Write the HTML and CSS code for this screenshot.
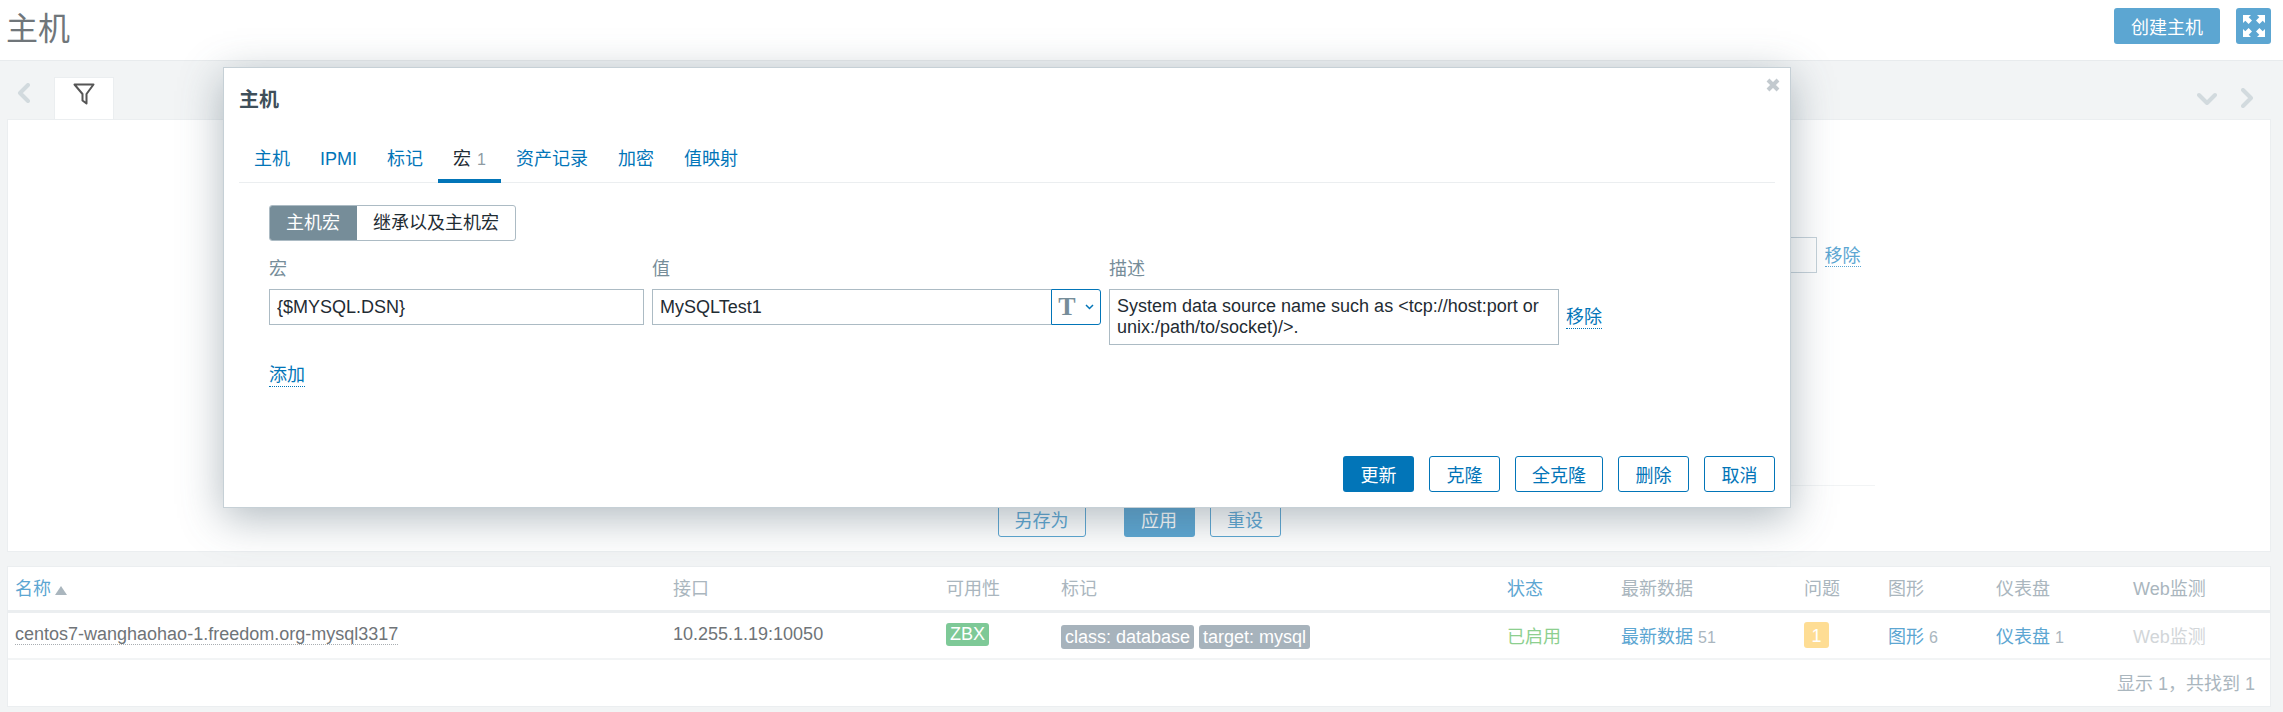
FILE: index.html
```html
<!DOCTYPE html>
<html lang="zh-CN">

<head>
  <meta charset="UTF-8">
  <title>主机</title>
  <link rel="stylesheet" href="styles.css">
</head>

<body>
  <header class="page-header">
    <h1>主机</h1>
    <div class="header-controls">
      <button class="btn btn-faded">创建主机</button>
      <button class="btn btn-faded btn-icon" aria-label="全屏">
        <svg width="22" height="22" viewBox="0 0 22 22" fill="#fff">
          <path d="M0 0h8L5.7 2.3 9 5.6 5.6 9 2.3 5.7 0 8z" />
          <path d="M22 0v8l-2.300-2.300L16.400 9 13 5.600l3.300-3.300L14 0z" />
          <path d="M0 22v-8l2.300 2.300L5.600 13 9 16.400l-3.300 3.300L8 22z" />
          <path d="M22 22h-8l2.300-2.300L13 16.400 16.400 13l3.300 3.300L22 14z" />
        </svg>
      </button>
    </div>
  </header>

  <main>
    <div class="filter-tabs">
      <svg class="nav-arrow" width="13" height="20" viewBox="0 0 13 20">
        <path d="M11 2 3 10l8 8" />
      </svg>
      <div class="filter-tab">
        <svg width="22" height="22" viewBox="0 0 22 22" fill="none" stroke="#555" stroke-width="2" stroke-linejoin="round">
          <path d="M1.500 1.500h19L13.500 11v9.500l-4-3V11z" />
        </svg>
      </div>
      <div class="filter-nav">
        <svg class="nav-arrow" width="20" height="13" viewBox="0 0 20 13">
          <path d="m2 3 8 8 8-8" />
        </svg>
        <svg class="nav-arrow" width="13" height="20" viewBox="0 0 13 20">
          <path d="m2 2 8 8-8 8" />
        </svg>
      </div>
    </div>

    <section class="panel filter-panel">
      <div class="filter-form">
        <div class="filter-row">
          <input class="filter-input" type="text">
          <a class="link-faded" href="#">移除</a>
        </div>
        <div class="filter-buttons">
          <button class="btn btn-outline-faded save-as">另存为</button>
          <button class="btn btn-faded">应用</button>
          <button class="btn btn-outline-faded">重设</button>
        </div>
      </div>
    </section>

    <section class="panel hosts-panel">
      <table class="hosts-table">
        <colgroup>
          <col class="col-name">
          <col class="col-interface">
          <col class="col-avail">
          <col class="col-tags">
          <col class="col-status">
          <col class="col-latest">
          <col class="col-problems">
          <col class="col-graphs">
          <col class="col-dash">
          <col class="col-web">
        </colgroup>
        <thead>
          <tr>
            <th class="th-sorted">名称<span class="sort-arrow"></span></th>
            <th>接口</th>
            <th>可用性</th>
            <th>标记</th>
            <th class="th-link">状态</th>
            <th>最新数据</th>
            <th>问题</th>
            <th>图形</th>
            <th>仪表盘</th>
            <th>Web监测</th>
          </tr>
        </thead>
        <tbody>
          <tr>
            <td><a class="host-link" href="#">centos7-wanghaohao-1.freedom.org-mysql3317</a></td>
            <td>10.255.1.19:10050</td>
            <td><span class="badge badge-zbx">ZBX</span></td>
            <td><span class="tag">class: database</span><span class="tag">target: mysql</span></td>
            <td class="status-on">已启用</td>
            <td><a class="cell-link" href="#">最新数据</a> <sup>51</sup></td>
            <td><span class="badge badge-problem">1</span></td>
            <td><a class="cell-link" href="#">图形</a> <sup>6</sup></td>
            <td><a class="cell-link" href="#">仪表盘</a> <sup>1</sup></td>
            <td class="cell-off">Web监测</td>
          </tr>
        </tbody>
      </table>
      <div class="table-stats">显示 1，共找到 1</div>
    </section>
  </main>

  <div class="modal">
    <svg class="modal-close" width="14" height="14" viewBox="0 0 14 14">
      <path d="M2 2l10 10M12 2 2 12" />
    </svg>
    <h2>主机</h2>

    <ul class="modal-tabs">
      <li><a href="#">主机</a></li>
      <li><a href="#">IPMI</a></li>
      <li><a href="#">标记</a></li>
      <li class="active"><a href="#">宏</a> <sup>1</sup></li>
      <li><a href="#">资产记录</a></li>
      <li><a href="#">加密</a></li>
      <li><a href="#">值映射</a></li>
    </ul>

    <div class="macro-tab">
      <div class="radio-group">
        <span class="radio-on">主机宏</span>
        <span class="radio-off">继承以及主机宏</span>
      </div>

      <div class="macro-grid">
        <label>宏</label>
        <label>值</label>
        <label>描述</label>
        <span></span>

        <input class="text-input" type="text" value="{$MYSQL.DSN}">
        <div class="value-cell">
          <input class="text-input" type="text" value="MySQLTest1">
          <button class="type-btn">
            <span class="type-t">T</span>
            <svg width="9" height="6" viewBox="0 0 9 6" fill="none" stroke="#0275b8" stroke-width="1.500">
              <path d="m1 1 3.500 3.500L8 1" />
            </svg>
          </button>
        </div>
        <div class="desc-box">System data source name such as &lt;tcp://host:port or unix:/path/to/socket)/&gt;.</div>
        <a class="link remove-link" href="#">移除</a>
      </div>

      <a class="link add-link" href="#">添加</a>
    </div>

    <div class="modal-footer">
      <button class="btn btn-primary">更新</button>
      <button class="btn btn-outline">克隆</button>
      <button class="btn btn-outline">全克隆</button>
      <button class="btn btn-outline">删除</button>
      <button class="btn btn-outline">取消</button>
    </div>
  </div>
</body>

</html>
```

FILE: styles.css
```css
* {
  margin: 0;
  padding: 0;
  box-sizing: border-box;
}

html,
body {
  height: 712px;
  overflow: hidden;
}

body {
  font-family: "Liberation Sans", "Noto Sans CJK SC", sans-serif;
  font-size: 18px;
  color: #6f7478;
  background-color: #f2f4f5;
  position: relative;
}

a {
  text-decoration: none;
}

sup {
  font-size: 16px;
  vertical-align: baseline;
  color: #aab6be;
}

/* Header */
.page-header {
  height: 61px;
  background-color: #fff;
  border-bottom: 1px solid #e8ebed;
  display: flex;
  justify-content: space-between;
  align-items: flex-start;
  padding: 8px 12px 0 6px;
}

.page-header h1 {
  font-size: 32px;
  font-weight: 400;
  line-height: 36px;
  margin-top: 3px;
  color: #70767a;
}

.header-controls {
  display: flex;
  gap: 16px;
}

/* Buttons */
.btn {
  height: 36px;
  min-width: 71px;
  padding: 0 16px;
  font-family: inherit;
  font-size: 18px;
  border-radius: 3px;
  border: 1px solid transparent;
  background: #fff;
}

.btn-faded {
  background-color: #5ca6d2;
  color: #fff;
}

.btn-icon {
  min-width: 35px;
  width: 35px;
  padding: 0;
  display: flex;
  align-items: center;
  justify-content: center;
}

.btn-outline-faded {
  border-color: #5ca6d2;
  color: #5ca6d2;
}

.btn-primary {
  background-color: #0275b8;
  color: #fff;
}

.btn-outline {
  border-color: #0275b8;
  color: #0275b8;
}

/* Filter */
.filter-tabs {
  height: 58px;
  display: flex;
  align-items: flex-end;
  padding: 0 29px 0 17px;
}

.nav-arrow {
  fill: none;
  stroke: #d2dade;
  stroke-width: 4;
  stroke-linecap: round;
  stroke-linejoin: round;
}

.filter-tabs > .nav-arrow {
  margin-bottom: 16px;
}

.filter-tab {
  width: 60px;
  height: 42px;
  margin-left: 24px;
  background-color: #fff;
  border: 1px solid #ebeef0;
  border-bottom: none;
  display: flex;
  justify-content: center;
  padding-top: 5px;
}

.filter-nav {
  margin-left: auto;
  display: flex;
  align-items: center;
  gap: 24px;
  height: 42px;
}

.panel {
  margin: 0 12px 0 7px;
  background-color: #fff;
  border: 1px solid #ebeef0;
}

.filter-panel {
  height: 433px;
}

.filter-form {
  width: 1471px;
  margin: 0 auto;
}

.filter-row {
  display: flex;
  justify-content: flex-end;
  align-items: flex-start;
  gap: 8px;
  padding: 117px 14px 0 0;
  height: 366px;
  border-bottom: 1px solid #f2f4f5;
}

.filter-input {
  width: 300px;
  height: 36px;
  border: 1px solid #c6d2da;
}

.link-faded {
  color: #5ca6d2;
  margin-top: 9px;
  border-bottom: 1px dotted #5ca6d2;
  line-height: 20px;
}

.filter-buttons {
  display: flex;
  justify-content: center;
  gap: 15px;
  padding-top: 15px;
}

.save-as {
  margin-right: 23px;
}

/* Hosts table */
.hosts-panel {
  margin-top: 14px;
  height: 141px;
}

.hosts-table {
  table-layout: fixed;
  width: 2262px;
  border-collapse: collapse;
}

.col-name { width: 658px; }
.col-interface { width: 273px; }
.col-avail { width: 115px; }
.col-tags { width: 446px; }
.col-status { width: 114px; }
.col-latest { width: 183px; }
.col-problems { width: 84px; }
.col-graphs { width: 108px; }
.col-dash { width: 137px; }
.col-web { width: 144px; }

.hosts-table th,
.hosts-table td {
  text-align: left;
  padding-left: 7px;
  white-space: nowrap;
}

.hosts-table th {
  height: 44px;
  padding-bottom: 2px;
  font-weight: 400;
  color: #aab6be;
  border-bottom: 3px solid #ebeef0;
}

.hosts-table .th-sorted,
.hosts-table .th-link {
  color: #5ca6d2;
}

.sort-arrow {
  display: inline-block;
  margin-left: 4px;
  border-left: 6px solid transparent;
  border-right: 6px solid transparent;
  border-bottom: 9px solid #aab6be;
}

.hosts-table td {
  height: 48px;
  border-bottom: 2px solid #f2f4f5;
  padding-bottom: 1px;
}

.host-link {
  color: #6f7478;
  border-bottom: 1px dotted #a9aeb2;
}

.badge {
  display: inline-block;
  border-radius: 3px;
  color: #fff;
}

.badge-zbx {
  height: 23px;
  padding: 0 4px;
  line-height: 23px;
  background-color: #7ec997;
}

.badge-problem {
  width: 25px;
  height: 26px;
  line-height: 28px;
  text-align: center;
  background-color: #fedd94;
}

.tag {
  display: inline-block;
  height: 24px;
  line-height: 24px;
  padding: 0 4px;
  margin: 4px 5px 0 0;
  border-radius: 3px;
  color: #fff;
  background-color: #a7b3bc;
}

.status-on {
  color: #8dcf8f;
}

.cell-link {
  color: #5ca6d2;
}

.cell-off {
  color: #d2d6d9;
}

.table-stats {
  text-align: right;
  padding: 9px 15px 0 0;
  color: #aab6be;
}

/* Modal */
.modal {
  position: absolute;
  left: 223px;
  top: 67px;
  width: 1568px;
  height: 441px;
  padding: 0 15px;
  background-color: #fff;
  border: 1px solid #c6d0d6;
  box-shadow: 0 10px 40px rgba(70, 90, 105, 0.42);
  color: #1f2c33;
}

.modal-close {
  position: absolute;
  top: 10px;
  right: 10px;
  fill: none;
  stroke: #c3cacf;
  stroke-width: 4;
}

.modal h2 {
  font-size: 20px;
  line-height: 24px;
  padding-top: 20px;
  height: 66px;
  color: #3f4f5a;
}

.modal-tabs {
  display: flex;
  list-style: none;
  height: 49px;
  border-bottom: 1px solid #ebeef0;
}

.modal-tabs li {
  padding: 14px 15px 0;
  line-height: 22px;
  height: 49px;
}

.modal-tabs a {
  color: #0275b8;
}

.modal-tabs .active {
  border-bottom: 4px solid #0275b8;
}

.modal-tabs .active a {
  color: #1f2c33;
}

.modal-tabs sup {
  margin-left: 1px;
  color: #8f9ba3;
}

.macro-tab {
  padding: 22px 30px 0;
}

.radio-group {
  display: flex;
  width: 247px;
  height: 36px;
  border: 1px solid #acbbc4;
  border-radius: 3px;
  overflow: hidden;
  line-height: 34px;
  text-align: center;
}

.radio-on {
  width: 88px;
  margin: -1px 0 -1px -1px;
  line-height: 36px;
  color: #fff;
  background-color: #768d99;
}

.radio-off {
  flex: 1;
}

.macro-grid {
  display: grid;
  grid-template-columns: 375px 449px 450px auto;
  column-gap: 8px;
  row-gap: 9px;
  margin-top: 18px;
  align-items: start;
}

.macro-grid label {
  color: #768d99;
  line-height: 21px;
}

.text-input {
  height: 36px;
  width: 100%;
  padding: 0 7px;
  font-family: inherit;
  font-size: 18px;
  color: #1f2c33;
  border: 1px solid #acbbc4;
}

.value-cell {
  display: flex;
}

.value-cell .text-input {
  flex: 1;
  min-width: 0;
  border-right: none;
}

.type-btn {
  width: 50px;
  height: 36px;
  flex: none;
  background: #fff;
  border: 1px solid #0275b8;
  border-radius: 0 3px 3px 0;
  display: flex;
  align-items: center;
  justify-content: center;
  gap: 9px;
}

.type-t {
  font-family: "Liberation Serif", serif;
  font-weight: 700;
  font-size: 26px;
  line-height: 26px;
  color: #768d99;
}

.desc-box {
  height: 56px;
  padding: 6px 7px;
  line-height: 21px;
  border: 1px solid #acbbc4;
}

.link {
  color: #0275b8;
  border-bottom: 1px dotted #0275b8;
}

.remove-link {
  justify-self: start;
  line-height: 21px;
  margin-top: 18px;
  margin-left: -1px;
}

.add-link {
  display: inline-block;
  line-height: 21px;
  margin-top: 20px;
}

.modal-footer {
  position: absolute;
  right: 15px;
  bottom: 15px;
  display: flex;
  gap: 15px;
}
```
